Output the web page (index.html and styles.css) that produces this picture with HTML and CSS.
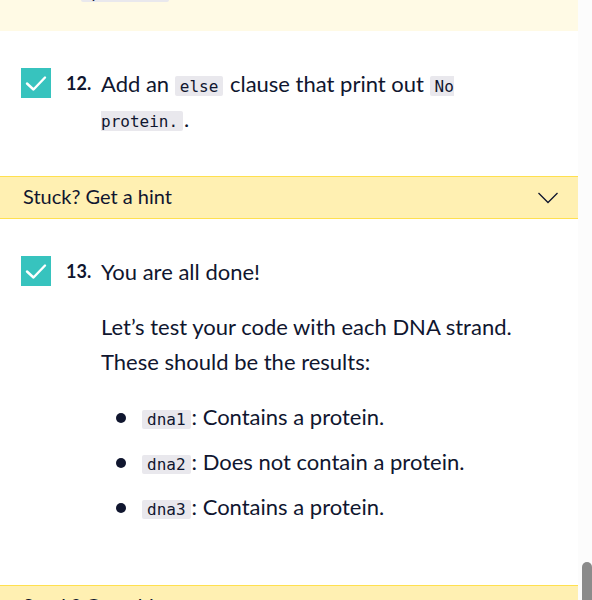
FILE: index.html
```
<!DOCTYPE html>
<html lang="en">
<head>
<meta charset="utf-8">
<title>Instructions</title>
<link rel="stylesheet" href="styles.css">
</head>
<body>
<div class="panel">
  <main class="content">
    <div class="hint-body"><code>protein</code></div>
    <section class="step">
      <span class="tick">
        <input type="checkbox" id="step12" checked>
        <svg viewBox="0 0 30 30" aria-hidden="true"><path d="M6 15.5 12.5 21.5 24 9.5"/></svg>
      </span>
      <label class="number" for="step12">12.</label>
      <div class="text">
        <p>Add an <code>else</code> clause that print out <code>No protein.</code>.</p>
      </div>
    </section>
    <button class="hint" type="button">Stuck? Get a hint
      <svg viewBox="0 0 20 12" aria-hidden="true"><path d="M.5 1 10 10.5 19.5 1"/></svg>
    </button>
    <section class="step step-long">
      <span class="tick">
        <input type="checkbox" id="step13" checked>
        <svg viewBox="0 0 30 30" aria-hidden="true"><path d="M6 15.5 12.5 21.5 24 9.5"/></svg>
      </span>
      <label class="number" for="step13">13.</label>
      <div class="text">
        <p>You are all done!</p>
        <p>Let’s test your code with each DNA strand. These should be the results:</p>
        <ul>
          <li><code>dna1</code>: Contains a protein.</li>
          <li><code>dna2</code>: Does not contain a protein.</li>
          <li><code>dna3</code>: Contains a protein.</li>
        </ul>
      </div>
    </section>
    <button class="hint" type="button">Stuck? Get a hint
      <svg viewBox="0 0 20 12" aria-hidden="true"><path d="M.5 1 10 10.5 19.5 1"/></svg>
    </button>
  </main>
  <div class="track"><div class="thumb"></div></div>
</div>
</body>
</html>
```

FILE: styles.css
```
* {
  box-sizing: border-box;
}

body {
  margin: 0;
  background: #fff;
  color: #10162f;
  font-family: Lato, "Liberation Sans", sans-serif;
  font-size: 22px;
  line-height: 35px;
}

.panel {
  display: grid;
  grid-template-columns: 1fr 14px;
  height: 100vh;
  overflow: hidden;
}

.content {
  min-width: 0;
  min-height: 0;
  overflow: hidden;
}

code {
  padding: 1px 5px 0;
  margin-right: 1px;
  border-radius: 2px;
  background: #e9e8ed;
  font-family: "DejaVu Sans Mono", monospace;
  font-size: 16px;
  line-height: 18px;
}

.hint-body {
  display: flex;
  flex-direction: column;
  align-items: flex-start;
  justify-content: flex-end;
  height: 31px;
  padding: 0 0 29px 81px;
  background: #fffae5;
}

.hint-body code {
  flex: none;
  width: 88px;
  text-align: center;
}

.step {
  display: grid;
  grid-template-columns: 30px 35px 1fr;
  padding: 35px 60px 40px 21px;
}

.step-long {
  padding-bottom: 61px;
}

.tick {
  display: grid;
  width: 30px;
  height: 30px;
  margin-top: 2px;
}

.tick input,
.tick svg {
  grid-area: 1 / 1;
  width: 30px;
  height: 30px;
  margin: 0;
}

.tick input {
  appearance: none;
  background: #37c3be;
}

.tick svg {
  fill: none;
  stroke: #fff;
  stroke-width: 2.4;
  stroke-linecap: round;
  stroke-linejoin: round;
  pointer-events: none;
}

.number {
  padding-left: 15px;
  font-size: 18px;
  font-weight: 700;
  line-height: 34px;
}

.text {
  padding-left: 15px;
}

.text p {
  margin: 0 0 20px;
}

.text p:only-child {
  margin: 0;
}

ul {
  display: grid;
  gap: 10px;
  margin: 0;
  padding: 0 0 0 15px;
  list-style: none;
}

li {
  display: flex;
  align-items: baseline;
}

li::before {
  content: "";
  align-self: center;
  width: 10px;
  height: 10px;
  margin: 3px 16px 0 0;
  border-radius: 50%;
  background: #10162f;
}

.hint {
  display: flex;
  align-items: center;
  justify-content: space-between;
  width: 100%;
  height: 43px;
  padding: 0 20px 4px 23px;
  border: solid #ffe04f;
  border-width: 1px 0;
  background: #fff0b2;
  color: inherit;
  font-family: inherit;
  font-size: 20px;
}

.hint svg {
  width: 20px;
  height: 12px;
  margin-top: 4px;
  fill: none;
  stroke: #10162f;
  stroke-width: 1.3;
}

.track {
  display: flex;
  align-items: flex-end;
  padding-left: 4px;
  background: #fcfcfc;
}

.thumb {
  width: 100%;
  height: 38px;
  border-radius: 5px 5px 0 0;
  background: #8b8b8b;
}
```
